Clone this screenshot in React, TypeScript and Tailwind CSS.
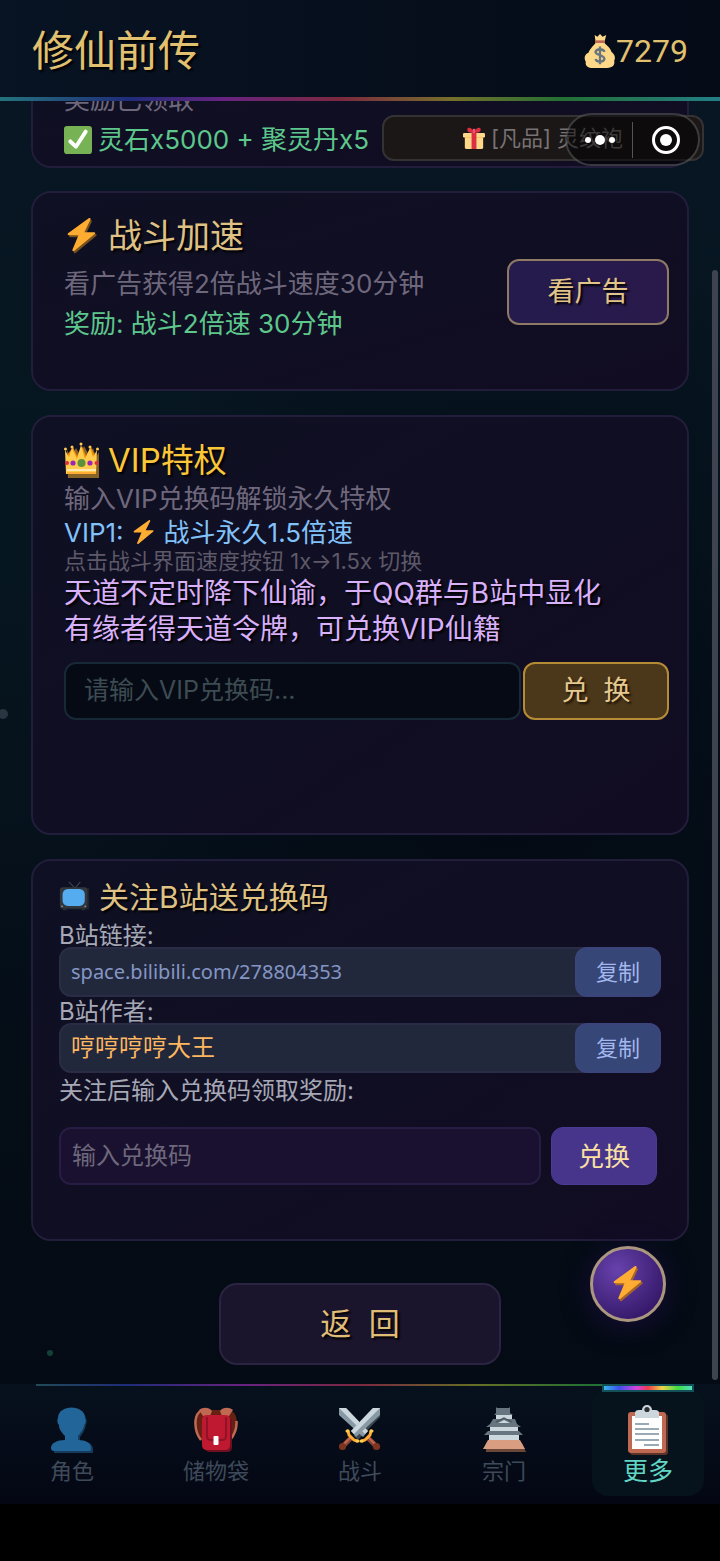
import type { ReactNode } from 'react';

const FONT = "font-['Inter','Noto_Sans_CJK_SC',sans-serif]";

function Bolt({ className, shade }: { className: string; shade?: string }) {
  return (
    <svg viewBox="0 0 36 38" className={className} aria-hidden>
      {shade && <path fill={shade} d="M33.4 17.6a1 1 0 0 0-.9-.6H22.2L28.4 3.7a1.2 1.2 0 0 0-1.8-1.4L4.8 18.2a1.2 1.2 0 0 0 .7 2.1h10.2L9.4 35.5a1.2 1.2 0 0 0 1.8 1.4l22-18.2a1 1 0 0 0 .2-1.1z" />}
      <path fill="#ffac33" d="M31.9 15.6a1 1 0 0 0-.9-.6H20.5L27 1.7A1.2 1.2 0 0 0 25.1.3L3.3 16.2a1.2 1.2 0 0 0 .7 2.1h10.3L7.9 33.5a1.2 1.2 0 0 0 1.8 1.4l22-18.2a1 1 0 0 0 .2-1.1z" />
    </svg>
  );
}

function MoneyBag() {
  return (
    <svg viewBox="0 0 36 40" className="h-9 w-8" aria-hidden>
      <path fill="#fdd888" d="M12 2l3 2 3-3 3 3 4-2-2 8H13z" />
      <path fill="#fdd888" d="M13 11c-4 5-6 6-8 11-5 2-5 7-3 10-1 5 3 7 8 7h16c6 0 9-3 8-8 2-4 0-8-3-10-2-5-4-6-8-10z" />
      <path fill="#bf6952" d="M12.5 8h11v3h-11z" />
      <path fill="none" stroke="#67757f" strokeWidth="2.6" d="M18 15v20M23 21c-1-4-9-4-10 0 0 4 10 3 10 8-1 4-9 4-10 0" />
    </svg>
  );
}

function Check() {
  return (
    <svg viewBox="0 0 36 36" className="size-7 shrink-0" aria-hidden>
      <rect width="36" height="36" rx="4" fill="#77b255" />
      <path fill="#fff" d="M29.3 5.2a2.5 2.5 0 0 0-3.5.7L14.9 22.7l-5-4.7a2.5 2.5 0 0 0-3.5 3.7l7.2 6.7a2.6 2.6 0 0 0 3.8-.5L30 8.7a2.5 2.5 0 0 0-.7-3.5z" />
    </svg>
  );
}

function Gift() {
  return (
    <svg viewBox="0 0 36 36" className="size-[22px]" aria-hidden>
      <path fill="#fdd888" d="M3 13h30v20a3 3 0 0 1-3 3H6a3 3 0 0 1-3-3z" />
      <path fill="#fcab40" d="M3 15h30v3H3z" />
      <rect y="10" width="36" height="7" rx="2" fill="#fdd888" />
      <path fill="#dd2e44" d="M14 9h8v27h-8zM18 9C12 10 7 9 7 4c0-5 9-3 11 5zM18 9c6 1 11 0 11-5 0-5-9-3-11 5z" />
      <path fill="#ea596e" d="M16 3h4v7h-4z" />
    </svg>
  );
}

function Crown() {
  return (
    <svg viewBox="0 0 36 36" className="size-9 shrink-0" aria-hidden>
      <path fill="#876426" d="M3 8l4 7 5-9 4 7 4-9 5 9 4-7 3 9 3-5v27H4z" />
      <path fill="#f4900c" d="M4 12l5-7 4 9 5-10 4 10 5-9 3 7v10H4z" />
      <path fill="#ffcc4d" d="M1 8l4 7 3-9 5 11 4-14 4 14 5-11 3 9 4-7-1 24H2z" />
      <path fill="#ffe8b6" d="M3 27h29v2H3z" />
      <path fill="#ffac33" d="M3 30h29v2H3z" />
      <g fill="#ffcc4d">
        <circle cx="1.5" cy="7" r="1.5" />
        <circle cx="8" cy="5" r="1.5" />
        <circle cx="17" cy="2" r="1.5" />
        <circle cx="26" cy="5" r="1.5" />
        <circle cx="33.5" cy="7" r="1.5" />
      </g>
      <circle cx="17.5" cy="21" r="4" fill="#5c913b" />
      <circle cx="9" cy="21" r="2.6" fill="#9b26b6" />
      <circle cx="26" cy="21" r="2.6" fill="#9b26b6" />
      <circle cx="3" cy="21" r="2" fill="#dd2e44" />
      <circle cx="32.5" cy="21" r="2" fill="#dd2e44" />
    </svg>
  );
}

function Tv() {
  return (
    <svg viewBox="0 0 36 36" className="size-8 shrink-0" aria-hidden>
      <path fill="none" stroke="#3b444b" strokeWidth="1.2" d="M11 1l7 7 6-7" />
      <path fill="#1d242b" d="M3 8h31v24H3z" />
      <rect x="1" y="7" width="31" height="24" rx="3" fill="#31373d" />
      <path fill="#292f33" d="M4 31h5l-1 2H5zM25 31h5l-1 2h-3z" />
      <rect x="4" y="9" width="25" height="19" rx="6" fill="#55acee" />
      <circle cx="3.5" cy="28.5" r="1" fill="#8899a6" />
      <circle cx="29.5" cy="28.5" r="1" fill="#8899a6" />
    </svg>
  );
}

function Person() {
  return (
    <svg viewBox="0 0 44 46" className="h-12 w-11" aria-hidden>
      <path fill="#153c5c" d="M17 30c-5-5-6-9-6-13-2-2 0-4 0-5C12-1 35-1 36 12c1 1 1 4 0 5-1 6-3 9-6 13v4c8 0 13 3 13 8v4H4v-4c0-5 5-8 13-8z" />
      <path fill="#226699" d="M15 29c-5-5-6-8-6-11-2-2-2-5-1-7C8-3 35-3 35 11c1 2 1 5-1 7 0 3-2 6-6 11v4c8 0 13 3 13 8 0 2 0 3-2 3H4c-2 0-3-1-3-3 0-5 6-8 14-8z" />
    </svg>
  );
}

function Backpack() {
  return (
    <svg viewBox="0 0 44 46" className="h-12 w-11" aria-hidden>
      <path fill="#662113" d="M10 3C-3 4-1 24 8 34l4-3V8h20v23l4 3C45 23 46 4 34 3z" />
      <path fill="none" stroke="#bf6952" strokeWidth="2.5" d="M7 33C3 28 1 22 1.5 14 2 8 4 5 8 3M36 33c5-6 7-12 6.500-19" />
      <path fill="#bf6952" d="M5 3C9 0 15 0 18 4l-2 5H9zM39 3c-4-3-10-3-13 1l2 5h7z" />
      <path fill="#6e1020" d="M11 12h27v28q0 5-5 5H16q-5 0-5-5z" />
      <path fill="#be1931" d="M8 13q0-5 5-5h18q5 0 5 5v25q0 5-5 5H13q-5 0-5-5z" />
      <path fill="none" stroke="#8f1226" strokeWidth="2" d="M13 10v19q0 4 4 4h11q4 0 4-4V10" />
      <rect x="19.5" y="29" width="5" height="9" rx="1" fill="#fff" />
    </svg>
  );
}

function Sword() {
  return (
    <g fill="none">
      <path fill="#8899a6" d="M1 1h7l22 23-5 6L1 8z" />
      <path fill="#ccd6dd" d="M1 1h7l22 23-3 3z" />
      <path stroke="#8a4433" strokeWidth="5" d="M29 30l8 8" />
      <path stroke="#bf6952" strokeWidth="2" d="M30 30l7 7" />
      <circle cx="38.5" cy="39.5" r="3.6" fill="#7b341f" />
      <path stroke="#ffac33" strokeWidth="3" strokeLinecap="round" d="M24 34l3-1 5-5 1-4" />
      <path stroke="#ffcc4d" strokeWidth="3" strokeLinecap="round" d="M23 34h1M33 24h1" />
    </g>
  );
}

function Swords() {
  return (
    <svg viewBox="0 0 44 46" className="h-12 w-11" aria-hidden>
      <path fill="#3d464d" d="M36 4l6-1v7L20 33l-4-4z" />
      <Sword />
      <g transform="matrix(-1 0 0 1 43 0)">
        <Sword />
      </g>
    </svg>
  );
}

function Pagoda() {
  return (
    <svg viewBox="0 0 44 46" className="h-12 w-11" aria-hidden>
      <path fill="#6b473a" d="M4 36h36l4 9H4z" />
      <path fill="#ccd6dd" d="M14 7h16v7H14zM8 19h28v14H8z" />
      <path fill="#66757f" d="M14 0l1 1h12l1-1v6l3 2H12l2-2zM11 12h22l2 5 4 3H4l4-3zM6 24h31l4 4H2z" />
      <path fill="#ccd6dd" d="M15 8h13v4H15zM8 20h27v3H8zM7 28h30v5H7zM16 16l6-3 6 3z" />
      <path fill="none" stroke="#4b5963" strokeWidth="1.5" d="M14 15l8-4 8 4" />
      <path fill="#d99e82" d="M6 33h32l5 9H1z" />
    </svg>
  );
}

function Clipboard() {
  return (
    <svg viewBox="0 0 40 50" className="h-13 w-10" aria-hidden>
      <rect x="2" y="9" width="38" height="41" rx="3" fill="#5c3329" />
      <rect y="7" width="38" height="41" rx="3" fill="#bf6952" />
      <path fill="#fff" d="M4 11h30v33H4z" />
      <path fill="#ccd6dd" d="M7 13V8q0-3 4-3h3a5 5 0 0 1 10 0h3q4 0 4 3v5z" />
      <circle cx="19" cy="4.5" r="2.6" fill="#292f33" />
      <path stroke="#99aab5" strokeWidth="2.2" d="M7 19h14M7 24h24M7 29h24M7 35h24M16 40h15" />
    </svg>
  );
}

function Card({ className = '', children }: { className?: string; children: ReactNode }) {
  return (
    <section className={`rounded-[20px] border-2 border-[#221d3b] bg-linear-to-br from-[#0f1023] to-[#110c22] ${className}`}>
      {children}
    </section>
  );
}

function CopyRow({ children }: { children: ReactNode }) {
  return (
    <div className="flex h-[50px] items-stretch rounded-xl border-2 border-[#2a2b45] bg-[#22283b]">
      <div className="flex flex-1 items-center pl-[10px]">{children}</div>
      <button type="button" className="-my-0.5 -mr-0.5 w-[86px] rounded-xl border-2 border-[#3b457b] bg-[#354677] text-[22px] text-[#a3b6ee]">
        复制
      </button>
    </div>
  );
}

const tabs = [
  { label: '角色', icon: <Person /> },
  { label: '储物袋', icon: <Backpack /> },
  { label: '战斗', icon: <Swords /> },
  { label: '宗门', icon: <Pagoda /> },
];

const shadow = '[text-shadow:2px_2px_2px_#000]';

export default function App() {
  return (
    <div className={`relative min-h-screen bg-black ${FONT}`}>
      <header className="flex h-[97px] items-center justify-between bg-linear-to-r from-[#081323] to-[#050b17] px-8 pt-1 text-[#e1c070]">
        <h1 className={`text-[42px] leading-none ${shadow}`}>修仙前传</h1>
        <div className="flex items-center font-['Roboto','Noto_Sans_CJK_SC',sans-serif] text-[32px] leading-none">
          <MoneyBag />
          7279
        </div>
      </header>
      <div className="h-1 bg-[linear-gradient(90deg,#24737d,#202c79_18%,#672380_31%,#7c2840_47%,#75702a_63%,#247034_78%,#237f87)]" />

      <main className="relative overflow-hidden bg-[radial-gradient(ellipse_at_70%_50%,#030913,transparent_60%),linear-gradient(180deg,#071622,#061620_35%,#050d17_75%,#040b14)] px-[31px] pb-[19px]">
        <Card className="-mt-[21px] rounded-t-none border-t-0 px-[31px] pb-1.5 text-[26px] leading-10">
          <p className="text-[#6f687d]">奖励已领取</p>
          <p className="flex items-center gap-1.5 text-[#5dc78c]">
            <Check />
            灵石x5000 + 聚灵丹x5
          </p>
        </Card>

        <Card className="mt-[23px] flex items-start justify-between pt-[21px] pr-[18px] pb-[45px] pl-[31px]">
          <div>
            <h2 className={`flex items-center gap-2 text-[34px] leading-[44px] text-[#dfc184] ${shadow}`}>
              <Bolt className="size-9" shade="#76501d" />
              战斗加速
            </h2>
            <p className="mt-1.5 text-[26px] leading-10 text-[#6f687d]">看广告获得2倍战斗速度30分钟</p>
            <p className="text-[26px] leading-10 text-[#5dc78c]">奖励: 战斗2倍速 30分钟</p>
          </div>
          <button type="button" className={`mt-[45px] h-[66px] w-[162px] rounded-xl border-2 border-[#8f7a65] bg-linear-to-r from-[#241b4d] to-[#2a194b] text-[27px] text-[#e2c48a] ${shadow}`}>
            看广告
          </button>
        </Card>

        <Card className="mt-6 pt-[22px] pr-[18px] pb-[113px] pl-[31px]">
          <h2 className={`flex items-center gap-2 text-[33px] leading-[42px] text-[#fbc638] ${shadow}`}>
            <Crown />
            VIP特权
          </h2>
          <p className="text-[26px] leading-9 text-[#6f687d]">输入VIP兑换码解锁永久特权</p>
          <p className="flex items-center text-[26px] leading-8 text-[#82c2fa]">
            VIP1:
            <Bolt className="mx-[7px] size-[26px]" />
            战斗永久1.5倍速
          </p>
          <p className="text-[22px] leading-6 text-[#5e5969]">点击战斗界面速度按钮 1x→1.5x 切换</p>
          <p className={`mt-0.5 text-[28px] leading-9 text-[#d9b0fa] ${shadow}`}>
            天道不定时降下仙谕，于QQ群与B站中显化
            <br />
            有缘者得天道令牌，可兑换VIP仙籍
          </p>
          <div className="mt-[15px] flex h-[58px] gap-0.5">
            <input
              aria-label="VIP兑换码"
              placeholder="请输入VIP兑换码..."
              className="min-w-0 flex-1 rounded-xl border-2 border-[#172936] bg-[#050a14] px-[18px] text-[25px] text-white placeholder:text-[#3d4b52]"
            />
            <button type="button" className={`w-[146px] rounded-xl border-2 border-[#b58b35] bg-[#4b3719] text-[27px] whitespace-pre text-[#e5c98f] [text-shadow:2px_2px_2px_#1d1408]`}>
              {'兑  换'}
            </button>
          </div>
        </Card>

        <Card className="mt-6 px-[26px] pt-3.5 pb-[54px]">
          <h2 className={`flex items-center gap-2 text-[30px] leading-[44px] text-[#dfc184] ${shadow}`}>
            <Tv />
            关注B站送兑换码
          </h2>
          <p className="pt-1.5 text-[24px] leading-[22px] text-[#a6a8b5]">B站链接:</p>
          <CopyRow>
            <a href="https://space.bilibili.com/278804353" className="font-['Noto_Sans',sans-serif] text-[20px] text-[#8496c6]">
              space.bilibili.com/278804353
            </a>
          </CopyRow>
          <p className="pt-1 text-[24px] leading-[22px] text-[#a6a8b5]">B站作者:</p>
          <CopyRow>
            <span className="text-[24px] text-[#ffb660]">哼哼哼哼大王</span>
          </CopyRow>
          <p className="text-[24px] leading-9 text-[#a6a8b5]">关注后输入兑换码领取奖励:</p>
          <div className="mt-[18px] mr-1 flex h-[58px] gap-2.5">
            <input
              aria-label="兑换码"
              placeholder="输入兑换码"
              className="min-w-0 flex-1 rounded-xl border-2 border-[#271c43] bg-[#19112f] px-[11px] text-[24px] text-white placeholder:text-[#6e687c]"
            />
            <button type="button" className="w-[106px] rounded-xl border border-[#4c3b94] bg-[#47358c] text-[26px] text-[#fae0a2]">
              兑换
            </button>
          </div>
        </Card>

        <button type="button" className={`mx-auto mt-[42px] block h-[82px] w-[282px] rounded-[18px] border-2 border-[#2b2342] bg-[#1b142d] text-[31px] whitespace-pre text-[#e0bd76] ${shadow}`}>
          {'返  回'}
        </button>

        <i className="absolute top-[608px] -left-0.5 size-2.5 rounded-full bg-[#273640]" />
        <i className="absolute top-[1249px] left-[47px] size-1.5 rounded-full bg-[#154038]" />
        <div className="absolute top-[169px] right-0.5 bottom-1 w-1.5 rounded-full bg-[#3d444f]" />
        <button
          type="button"
          aria-label="加速"
          className="absolute right-[54px] bottom-[62px] flex size-[76px] items-center justify-center rounded-full border-[3px] border-[#ab967f] bg-[radial-gradient(circle_at_35%_30%,#6742ac,#371a6c_75%)] shadow-[0_4px_28px_#170d38]"
        >
          <Bolt className="size-9" shade="#a66528" />
        </button>
      </main>

      <nav className="relative flex h-[120px] bg-linear-to-b from-[#07111e] to-[#040713]">
        <div className="absolute inset-x-9 top-0 h-0.5 bg-[linear-gradient(90deg,#204b57,#202c79_14%,#672380_32%,#7c2840_50%,#657024_68%,#247034_85%,#237f57)]" />
        {tabs.map((tab) => (
          <button key={tab.label} type="button" className="flex flex-1 flex-col items-center pt-[22px] text-[22px] leading-[34px] text-[#3e4a5a]">
            {tab.icon}
            {tab.label}
          </button>
        ))}
        <button type="button" aria-current="page" className="relative flex flex-1 flex-col items-center pt-[20px] text-[25px] leading-[30px] text-[#62d6c4]">
          <span className="absolute inset-x-4 top-1 bottom-2 rounded-2xl bg-[#06121c]" />
          <span className="absolute inset-x-[26px] top-0 h-2 border-2 border-[#135057] bg-[linear-gradient(90deg,#37b8ea,#3c50ef_17%,#d544df_37%,#ef3c4e_50%,#f0d54b_66%,#41df43_84%,#51dfc0)]" />
          <span className="relative">
            <Clipboard />
          </span>
          <span className="relative">更多</span>
        </button>
      </nav>

      {/* toast and mini-program capsule */}
      <div className="absolute top-[115px] right-4 flex h-[46px] w-[322px] items-center justify-center gap-1.5 rounded-xl border-2 border-[#353233] bg-[#1b1717] text-[22px] text-[#777273]">
        <Gift />
        [凡品] 灵纹袍
      </div>
      <div className="absolute top-[113px] right-[20px] flex h-[53px] w-[135px] items-center rounded-full border-2 border-white/20 bg-black/50">
        <button type="button" aria-label="更多选项" className="flex flex-1 items-center justify-center gap-1">
          <i className="size-[6px] rounded-full bg-white" />
          <i className="size-[10px] rounded-full bg-white" />
          <i className="size-[6px] rounded-full bg-white" />
        </button>
        <i className="h-9 w-px bg-white/30" />
        <button type="button" aria-label="关闭" className="flex flex-1 items-center justify-center">
          <i className="flex size-7 items-center justify-center rounded-full border-[3px] border-white">
            <i className="size-3 rounded-full bg-white" />
          </i>
        </button>
      </div>
    </div>
  );
}
